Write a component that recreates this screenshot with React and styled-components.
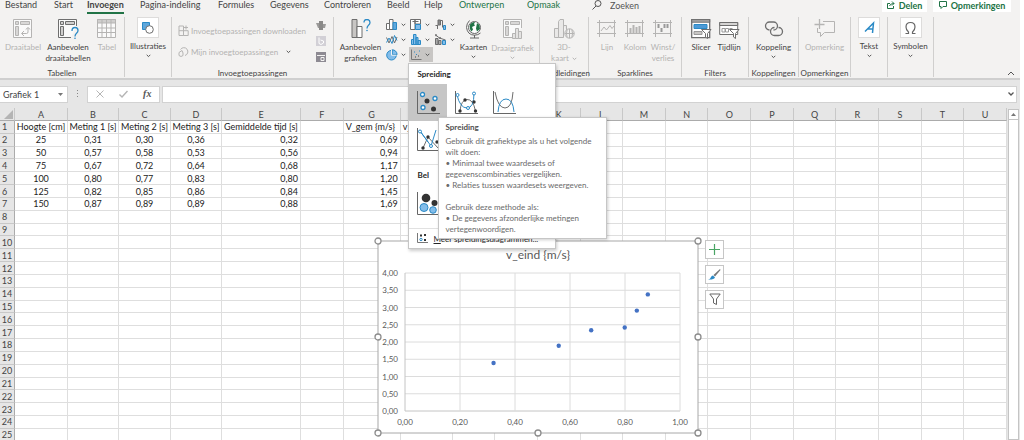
import { useState } from "react";
import styled, { createGlobalStyle } from "styled-components";

const GlobalStyle = createGlobalStyle`
  * {
    box-sizing: border-box;
  }
  body {
    margin: 0;
    background: #fff;
    font-family: Lato, "Open Sans", sans-serif;
    font-size: 8px;
    color: #444;
  }
  button, input {
    font: inherit;
    color: inherit;
    margin: 0;
    padding: 0;
    border: 0;
    background: none;
  }
  svg {
    display: block;
    flex: none;
  }
`;

const Page = styled.div`
  display: flex;
  flex-direction: column;
  height: 100vh;
  margin-right: 4px;
  overflow: hidden;
  background: #e6e6e6;
`;

/* tabs */

const TabBar = styled.div`
  display: flex;
  flex: none;
  height: 15px;
  padding-left: 5px;
  background: #f3f2f1;
  font-size: 9px;
`;

const Tab = styled.button`
  width: ${(p) => p.$w}px;
  height: 14px;
  padding-bottom: 4px;
  line-height: 10px;
  text-align: left;
  white-space: nowrap;
  color: ${(p) => (p.$context ? "#217346" : "#444")};
  font-weight: ${(p) => (p.$active ? 700 : 400)};

  span {
    display: inline-block;
    height: 14px;
    border-bottom: 2px solid ${(p) => (p.$active ? "#217346" : "transparent")};
  }
`;

const Search = styled.label`
  display: flex;
  flex: 1;
  align-items: center;
  gap: 8px;
  height: 10px;
  min-width: 0;

  input {
    width: 80px;
    height: 10px;
  }
  input::placeholder {
    color: #555;
    opacity: 1;
  }
`;

const TopActions = styled.div`
  display: flex;
  gap: 6px;
  padding-right: 9px;
`;

const ActionButton = styled.button`
  display: flex;
  align-items: center;
  justify-content: center;
  gap: 4px;
  width: ${(p) => p.$w}px;
  height: 12px;
  padding-bottom: 2px;
  background: #fff;
  color: #217346;
  font-weight: 700;
`;

/* ribbon */

const Ribbon = styled.div`
  display: flex;
  flex: none;
  height: 65px;
  padding-top: 2px;
  background: #f3f2f1;
  border-bottom: 2px solid #cfcfcf;
`;

const Group = styled.section`
  display: flex;
  flex-direction: column;
  justify-content: space-between;
  width: ${(p) => p.$w}px;
  height: 60px;
  border-right: 1px solid #d0cfce;
`;

const GroupBody = styled.div`
  display: flex;
  justify-content: center;
  padding: 0 ${(p) => p.$pad || 0}px;
`;

const GroupLabel = styled.div`
  line-height: 8px;
  text-align: center;
  white-space: nowrap;
`;

const BigButton = styled.button`
  display: flex;
  flex-direction: column;
  align-items: center;
  width: ${(p) => p.$w}px;
  padding-top: ${(p) => (p.$boxed ? 0 : 2)}px;
  color: ${(p) => (p.$off ? "#b4b3b2" : "#444")};
  line-height: 11px;
  white-space: nowrap;

  > span {
    margin: 3px 0 2px;
  }
`;

const LabelLine = styled.span`
  display: flex;
  align-items: center;
  justify-content: center;
  gap: 3px;
`;

const IconBox = styled.div`
  display: grid;
  place-items: center;
  width: 22px;
  height: 21px;
  background: #fff;
  border: 1px solid #dddcdb;
`;

const AddIns = styled.div`
  display: flex;
  flex: 1;
  flex-direction: column;
  gap: 10px;
  padding-top: 8px;
`;

const AddInButton = styled.button`
  display: flex;
  align-items: center;
  gap: 2px;
  height: 11px;
  color: #b4b3b2;
  white-space: nowrap;

  svg:last-child:not(:first-child) {
    margin-left: 6px;
  }
`;

const SideIcons = styled.div`
  display: flex;
  flex-direction: column;
  gap: 6px;
  padding: 4px 1px 0 0;
`;

const ChartGrid = styled.div`
  display: grid;
  grid-template-columns: 24px 25px 24px;
  grid-auto-rows: 15px;
  width: 74px;
`;

const SmallSlot = styled.div`
  position: relative;
`;

const SmallButton = styled.button`
  display: flex;
  align-items: center;
  gap: 3px;
  width: 24px;
  height: 15px;
  padding-left: 1px;
  background: ${(p) => (p.$on ? "#c8c6c4" : "transparent")};
`;

const Collapse = styled.button`
  align-self: flex-end;
  margin: 0 5px 2px auto;
`;

/* scatter menu */

const Menu = styled.div`
  position: absolute;
  top: 16px;
  left: -1px;
  z-index: 10;
  width: 148px;
  height: 186px;
  background: #fff;
  border: 1px solid #c6c6c6;
  box-shadow: 1px 2px 3px rgba(0, 0, 0, 0.2);
  color: #262626;
`;

const MenuTitle = styled.h2`
  margin: 0;
  padding: 4px 9px;
  font-size: 8px;
  line-height: 12px;
`;

const Tiles = styled.div`
  display: flex;
`;

const Tile = styled.button`
  display: grid;
  place-items: center;
  width: 38px;
  height: 37px;
  background: ${(p) => (p.$on ? "#c6c6c6" : "transparent")};
`;

const MenuSection = styled.div`
  margin-top: 6px;
  border-top: 1px solid #e1e1e1;
`;

const MoreLink = styled.button`
  display: flex;
  align-items: center;
  gap: 6px;
  padding: 4px 7px;
  white-space: nowrap;
`;

const Tooltip = styled.div`
  position: absolute;
  top: 53px;
  left: 29px;
  width: 169px;
  height: 122px;
  padding: 4px 7px;
  background: #fff;
  border: 1px solid #c6c6c6;
  box-shadow: 1px 1px 3px rgba(0, 0, 0, 0.2);
  color: #6a6a6a;
  line-height: 11px;

  strong {
    display: block;
    margin-bottom: 3px;
    color: #505050;
  }
  p {
    margin: 0;
    white-space: pre-line;
  }
`;

/* formula bar */

const FormulaBar = styled.div`
  display: flex;
  flex: none;
  align-items: center;
  height: 28px;
  padding: 5px 3px 5px 0;

  > * {
    height: 17px;
    background: #fff;
    border: 1px solid #d2d2d2;
  }
`;

const NameBox = styled.label`
  display: flex;
  align-items: center;
  width: 68px;
  padding: 0 4px 0 3px;
  border-left: 0;
  font-size: 9px;

  input {
    flex: 1;
    min-width: 0;
  }
`;

const Grip = styled.div`
  display: grid;
  place-items: center;
  width: 19px;
  background: none;
  border: 0;
`;

const FormulaTools = styled.div`
  display: flex;
  align-items: center;
  justify-content: space-around;
  width: 73px;
  margin-right: 2px;

  button {
    display: grid;
    place-items: center;
  }
`;

const Fx = styled.span`
  color: #555;
  font: italic 700 10px/12px "Liberation Serif", serif;
`;

const FormulaInput = styled.label`
  display: flex;
  flex: 1;
  align-items: center;
  padding-right: 2px;

  input {
    flex: 1;
  }
`;

/* sheet */

const SheetArea = styled.div`
  position: relative;
  display: flex;
  flex: 1;
  min-height: 0;
`;

const SheetView = styled.div`
  flex: 1;
  min-width: 0;
  overflow: hidden;
`;

const Sheet = styled.table`
  width: 100%;
  height: 334px;
  border-collapse: separate;
  border-spacing: 0;
  table-layout: fixed;
  background: #fff;
  color: #222;
  font-size: 9px;
  line-height: 11px;
`;

const Col = styled.col`
  width: ${(p) => (p.$w ? `${p.$w}px` : "auto")};
`;

const ColHead = styled.th`
  height: 13px;
  padding: 0;
  background: #e6e6e6;
  border-right: 1px solid #c8c8c8;
  border-bottom: 1px solid #ababab;
  color: #444;
  font-weight: 400;

  svg {
    margin-left: 4px;
  }
`;

const RowHead = styled.th`
  padding: 0;
  background: #e6e6e6;
  border-right: 1px solid #ababab;
  border-bottom: 1px solid #c8c8c8;
  color: #444;
  font-weight: 400;
  text-align: ${(p) => (p.$two ? "center" : "left")};
  text-indent: ${(p) => (p.$two ? 0 : 2)}px;
`;

const Cell = styled.td`
  padding: 0 ${(p) => (p.$align === "center" ? 0 : 2)}px;
  overflow: hidden;
  border-right: 1px solid #dedede;
  border-bottom: 1px solid #dedede;
  text-align: ${(p) => p.$align};
  white-space: nowrap;
`;

const ScrollBar = styled.div`
  width: 11px;
  margin: 1px 1px 0 1px;
  background: #fff;
  border: 1px solid #c4c4c4;

  button {
    display: grid;
    place-items: center;
    width: 9px;
    height: 10px;
    border-bottom: 1px solid #c4c4c4;
  }
`;

const ChartFrame = styled.div`
  position: absolute;
  top: 129px;
  left: 374px;
`;

const ChartTools = styled.div`
  position: absolute;
  top: 132px;
  left: 705px;
  display: flex;
  flex-direction: column;
  gap: 6px;

  button {
    display: grid;
    place-items: center;
    width: 19px;
    height: 19px;
    background: #fff;
    border: 1px solid #c6c6c6;
  }
`;

const DARK = "#6e6e6e";
const LIGHT = "#b5b4b3";
const BLUE = "#2b8ac6";
const SKY = "#83bdea";

const Svg = ({ w, h, c = DARK, children }) => (
  <svg width={w} height={h} viewBox={`0 0 ${w} ${h}`} fill="none" stroke={c} aria-hidden="true">
    {children}
  </svg>
);

const Chevron = ({ c = "#555" }) => (
  <Svg w={5} h={4} c={c}>
    <path d="M.7 .8l1.8 1.8L4.3 .8" />
  </Svg>
);

const PivotIcon = ({ c = LIGHT }) => (
  <Svg w={20} h={20} c={c}>
    <path d="M.5 .5h18v18H.5z" fill="#fafafa" />
    <path d="M2.5 2.5h3v3h-3zM7.5 2.5h9v3h-9zM2.5 7.5h3v9h-3z" fill="#d9d8d7" />
    <path d="M9 14.5h4.5q1.5 0 1.5-1.5V9M11 12l-2.5 2.5L11 17M12.7 10.5L15 8.500l2.300 2" />
  </Svg>
);

const RecommendedPivotIcon = () => (
  <Svg w={22} h={20}>
    <path d="M19.5 7V.5H1.5v18H14" fill="#fafafa" />
    <path d="M3.5 2.5h3v3h-3zM8.5 2.5h9v3h-9zM3.5 7.5h3v9h-3z" fill="#d0cfce" />
    <path d="M15 12q0-3.500 3-3.500t3 3q0 1.500-1.500 2.800T18 17.500" stroke={BLUE} strokeWidth="1.3" />
    <circle cx="18" cy="19.2" r=".8" fill={BLUE} stroke="none" />
  </Svg>
);

const TableIcon = () => (
  <Svg w={20} h={20} c={LIGHT}>
    <path d="M.5 .5h18v18H.5z" fill="#fafafa" />
    <path d="M.5 .5h18v3.500H.5z" fill="#cfcecd" />
    <path d="M.5 9h18M.5 13.5h18M5 .5v18M9.5 .5v18M14 .5v18" />
  </Svg>
);

const ShapesIcon = () => (
  <Svg w={14} h={14}>
    <path d="M1.5 1.5h7v7h-7z" fill="#5fa7dc" stroke={BLUE} />
    <circle cx="8.5" cy="8.5" r="3.8" fill="#fff" />
  </Svg>
);

const StoreIcon = () => (
  <Svg w={11} h={11} c={LIGHT}>
    <path d="M1 1h4.500v9.500H1zM1 5.700h9.200v4.800H5.500V5.700M8 .5v4M6 2.500h4" />
  </Svg>
);

const AddInsIcon = () => (
  <Svg w={11} h={11} c={LIGHT}>
    <path d="M7 9.500a4 4 0 1 0-4.500-6M4 4.500L1 6.500v3l2 1 2-1V7z" />
  </Svg>
);

const PeopleGraphIcon = () => (
  <Svg w={10} h={9} c="none">
    <path d="M0 2h3v5H2zM7 3h3l-1 4H7z" fill="#9b9a99" />
    <path d="M3 0h4v9H3z" fill="#8a8988" />
  </Svg>
);

const BingIcon = () => (
  <Svg w={10} h={10} c="none">
    <path d="M0 0h10v10H0z" fill="#d2d0d6" />
    <path d="M3 1.500v6l2 1 2.500-1.500V5L4.500 4" stroke="#fff" />
  </Svg>
);

const VisioIcon = () => (
  <Svg w={10} h={10} c="none">
    <path d="M0 0h10v10H0z" fill="#8d8a92" />
    <path d="M1 3.500h8M5 5.500h3v3H5z" stroke="#f3f2f1" />
  </Svg>
);

const RecommendedChartIcon = () => (
  <Svg w={20} h={20}>
    <path d="M1 .5h5v18H1z" fill="#c8c6c4" />
    <path d="M6 7.500h5v11H6z" fill="#fff" />
    <path d="M13 3.500q0-3 3-3t3 3q0 1.500-1.500 2.700T16 9.500" stroke={BLUE} strokeWidth="1.3" />
    <circle cx="16" cy="11.5" r=".8" fill={BLUE} stroke="none" />
  </Svg>
);

const ColumnIcon = () => (
  <Svg w={12} h={12}>
    <path d="M.5 4.500h3v6h-3z" fill="#fff" />
    <path d="M3.500 .5h3.500v10H3.500z" fill="#fff" />
    <path d="M7 3.500h3.500v7H7z" fill="#5fa7dc" stroke={BLUE} />
  </Svg>
);

const TreeMapIcon = () => (
  <Svg w={12} h={12}>
    <path d="M.5 .5h4.500v10H.5zM5 .5h5.500v4.500H5z" fill="#fff" />
    <path d="M5.500 5.500h5v5h-5z" fill={SKY} stroke={BLUE} />
    <path d="M2.500 2.500h6" />
  </Svg>
);

const WaterfallIcon = () => (
  <Svg w={12} h={12}>
    <path d="M.5 6.500h2M2.500 10V6M5.500 1.500h2v7" />
    <path d="M3 1h2.500v5H3z" fill="#888" />
    <path d="M8.500 6.500h2v4h-2z" fill={SKY} stroke={BLUE} />
  </Svg>
);

const LineIcon = () => (
  <Svg w={12} h={12}>
    <path d="M.5 3.500L3 9l3-6.500L8.500 9 11 3" />
    <path d="M.5 8.500L3 4l3 5.500 2.500-8L11 6.500" stroke={BLUE} />
  </Svg>
);

const HistogramIcon = () => (
  <Svg w={12} h={12} c={BLUE}>
    <path d="M1.500 5.500h2v5h-2zM3.500 .5h2.500v10H3.500zM6 3.500h2v7H6zM8 6.500h2.500v4H8z" fill={SKY} />
  </Svg>
);

const ComboIcon = () => (
  <Svg w={12} h={12}>
    <path d="M.5 4.500h2.500v6H.5zM3.500 6.500H6v4H3.500z" fill="#aaa" />
    <path d="M7.500 6.500h3v4h-3z" fill={SKY} stroke={BLUE} />
    <path d="M.5 1l4 3 6 2" />
    <circle cx="1" cy="1.2" r=".7" />
    <circle cx="5" cy="4" r=".7" />
  </Svg>
);

const PieIcon = () => (
  <Svg w={12} h={12} c={BLUE}>
    <circle cx="5.5" cy="6.2" r="4.800" fill={SKY} />
    <path d="M6.200 5.500V.8a4.800 4.800 0 0 1 4.900 4.700z" fill={SKY} />
    <path d="M5.500 1v5.200h5" stroke="#f3f2f1" />
  </Svg>
);

const ScatterSmallIcon = () => (
  <Svg w={12} h={12} c="#777">
    <path d="M1.500 .5v10h10" />
    <path d="M4 3h1M9 2h1M6 5.500h1" stroke={BLUE} />
    <path d="M5 8h1M8 7h1" stroke="#444" />
  </Svg>
);

const GlobeIcon = () => (
  <Svg w={18} h={20} c="#666">
    <circle cx="9.5" cy="8.5" r="6" fill="#fff" />
    <path d="M5 5.500q2-3 5-2.500l-1 2 1 1.500-3 1.500 1 2.500-1.500 2Q4 10 5 5.500zM12 4l2.500 2 .5 4-3 2.500-1-3z" fill="#217346" stroke="none" />
    <path d="M4.500 1.500Q1.500 4.500 1.500 8.500q1 7.500 8 7.700 3.500 0 6-2.200M9.500 16v3M5 19h9" />
  </Svg>
);

const PivotChartIcon = () => (
  <Svg w={21} h={21} c={LIGHT}>
    <path d="M19.500 9V.5h-18v18H11" fill="#fafafa" />
    <path d="M3.500 2.500h3v3h-3zM8.500 2.500h9v3h-9zM3.500 7.500h3v9h-3z" fill="#d9d8d7" />
    <path d="M10.500 14.500h3v5h-3zM13.500 9.500h3v10h-3zM16.500 12.500h3v7h-3z" fill="#e4e3e2" />
  </Svg>
);

const MapIcon = () => (
  <Svg w={21} h={20} c={LIGHT}>
    <path d="M.5 9.500h4v9h-4zM4.500 2.500L6 .5h3.500v18h-5zM9.500 6.500h3v5" fill="#e9e8e7" />
    <circle cx="15.5" cy="14.5" r="4.7" fill="#f3f2f1" />
    <path d="M10.800 14.500h9.400M15.500 9.800v9.400M13.200 10.500q-1.500 4 0 8M17.800 10.500q1.500 4 0 8" />
  </Svg>
);

const SparkIcon = ({ kind }) => (
  <Svg w={20} h={20} c={LIGHT}>
    <path d="M0 3.500h19M0 14.500h19M2.500 1v17M17.500 1v17" />
    {kind === "line" && <path d="M4 12l3-4 2.500 3L13 6.500l2 3 2-2.500" />}
    {kind === "column" && <path d="M5.500 14V9M8.500 14V6M11.500 14V8M14.500 14V7" strokeWidth="2" />}
    {kind === "winloss" && <path d="M5.500 5v4M8.500 9v4M11.500 5v4M14.500 5v4" strokeWidth="2" stroke="#999" />}
  </Svg>
);

const SlicerIcon = () => (
  <Svg w={21} h={20}>
    <path d="M.7 .7h18v18H.7z" fill="#fff" strokeWidth="1.3" />
    <path d="M.7 .7h18v2.500H.7z" fill="#aaa" />
    <path d="M3 5.500h13v4H3z" fill="#4d9ad6" stroke={BLUE} />
    <path d="M3 12.500h8v3H3z" fill="#c8c6c4" stroke="#999" />
    <path d="M10.500 10.500h9.500l-3.500 4v5l-2-1.500v-3.500z" fill="#fff" />
  </Svg>
);

const TimelineIcon = () => (
  <Svg w={21} h={20}>
    <path d="M.7 3.500h18v12H.7z" fill="#fff" />
    <path d="M.7 3.500h18v3H.7z" fill="#d5d4d3" />
    <path d="M3 9.500h3v3.500H3zM6.500 9.500h3v3.500h-3zM10.500 9.500h3" stroke="#999" />
    <path d="M10.500 10.500h9.500l-3.500 4v5l-2-1.500v-3.500z" fill="#fff" />
  </Svg>
);

const LinkIcon = () => (
  <Svg w={20} h={20}>
    <path d="M5.500 11a4 4 0 0 1 0-8h4a4 4 0 0 1 0 8" strokeWidth="1.3" />
    <path d="M14.500 8.500a4 4 0 0 1 0 8h-4a4 4 0 0 1 0-8" strokeWidth="1.3" />
  </Svg>
);

const CommentIcon = () => (
  <Svg w={21} h={20} c={LIGHT}>
    <path d="M9 2.500h11.500v11h-10l-4 4v-4h-3V9" fill="#f5f4f3" />
    <path d="M5.500 0v10M.5 5.500h10" strokeWidth="1.3" />
  </Svg>
);

const WordArtIcon = () => (
  <Svg w={13} h={14} c={BLUE}>
    <path d="M2 10.500L10.500 2l-1 10M4.500 8h5.500" strokeWidth="1.5" />
  </Svg>
);

const OmegaIcon = () => (
  <Svg w={13} h={14} c="#666">
    <path d="M1.500 12.500h3V11Q2 9 2 6q0-4.500 4.500-4.500T11 6q0 3-2.500 5v1.500h3" strokeWidth="1.2" />
  </Svg>
);

const axes = <path d="M1.500 0v22.500H24" stroke="#666" />;

const ScatterIcon = () => (
  <Svg w={24} h={24}>
    {axes}
    <g stroke={BLUE} fill="#fff" strokeWidth="1.3">
      <circle cx="6.5" cy="3.5" r="2" />
      <circle cx="19" cy="7.5" r="2" />
      <circle cx="7" cy="16.5" r="2" />
    </g>
    <g fill="#333" stroke="none">
      <circle cx="11" cy="10" r="2.5" />
      <circle cx="17.5" cy="18" r="2.5" />
    </g>
  </Svg>
);

const SmoothMarkersIcon = () => (
  <Svg w={24} h={24}>
    {axes}
    <path d="M6 20Q7 9 13 8.500T21.500 20" />
    <path d="M3 4q3 13 10 13T20 2" stroke={BLUE} />
    <g fill="#333" stroke="none">
      <circle cx="6" cy="20" r="1.7" />
      <circle cx="11" cy="9" r="1.7" />
      <circle cx="20" cy="11" r="1.7" />
      <circle cx="21.5" cy="20" r="1.7" />
    </g>
    <g fill="#fff" stroke={BLUE}>
      <circle cx="3.5" cy="4" r="1.5" />
      <circle cx="14" cy="17" r="1.5" />
      <circle cx="20" cy="2.5" r="1.5" />
    </g>
  </Svg>
);

const SmoothIcon = () => (
  <Svg w={24} h={24}>
    {axes}
    <path d="M3 1q3 16 10 16T21 1" />
    <path d="M6 21Q7 8 14 8t8 13" stroke={BLUE} />
  </Svg>
);

const StraightMarkersIcon = () => (
  <Svg w={24} h={24}>
    {axes}
    <path d="M7 20l5-11 10 11" />
    <path d="M4 3l11 15 5-16M4 3l8 11" stroke={BLUE} />
    <g fill="#333" stroke="none">
      <circle cx="7" cy="20" r="1.7" />
      <circle cx="12" cy="9" r="1.7" />
      <circle cx="21" cy="14" r="1.7" />
    </g>
    <g fill="#fff" stroke={BLUE}>
      <circle cx="4" cy="3.5" r="1.5" />
      <circle cx="15" cy="18" r="1.5" />
    </g>
  </Svg>
);

const BubbleIcon = () => (
  <Svg w={24} h={24}>
    {axes}
    <circle cx="10" cy="6" r="4.3" fill="#333" stroke="none" />
    <circle cx="18.5" cy="11" r="3" fill="#333" stroke="none" />
    <circle cx="8" cy="15.5" r="4" fill={SKY} stroke={BLUE} />
    <circle cx="17" cy="18" r="3.3" fill={SKY} stroke={BLUE} />
  </Svg>
);

const MoreIcon = () => (
  <Svg w={12} h={11} c="none">
    <path d="M1.500 0v9.500H12" stroke="#777" />
    <path d="M4 1.500h2v2H4zM8 1h2v2H8zM8 6h2v2H8z" fill="#333" />
    <circle cx="5" cy="6.5" r="1.2" stroke={BLUE} />
  </Svg>
);

const leftTabs = [
  ["Bestand", 49],
  ["Start", 33],
  ["Invoegen", 53],
  ["Pagina-indeling", 78],
  ["Formules", 52],
  ["Gegevens", 54],
  ["Controleren", 63],
  ["Beeld", 37],
  ["Help", 35],
  ["Ontwerpen", 68, true],
  ["Opmaak", 65, true],
];

const chartButtons = [
  ["Kolom", ColumnIcon],
  ["Hiërarchie", TreeMapIcon],
  ["Waterval", WaterfallIcon],
  ["Lijn", LineIcon],
  ["Statistiek", HistogramIcon],
  ["Combinatie", ComboIcon],
  ["Cirkel", PieIcon],
];

const columns = [
  ["A", 53],
  ["B", 51],
  ["C", 52],
  ["D", 51],
  ["E", 79],
  ["F"],
  ["G", 57],
  ["H", 52],
  ..."IJKLMNOPQRSTU".split("").map((name) => [name]),
];

const rows = [
  ["Hoogte [cm]", "Meting 1 [s]", "Meting 2 [s]", "Meting 3 [s]", "Gemiddelde tijd [s]", "", "V_gem {m/s}", "v_"],
  ["25", "0,31", "0,30", "0,36", "0,32", "", "0,69"],
  ["50", "0,57", "0,58", "0,53", "0,56", "", "0,94"],
  ["75", "0,67", "0,72", "0,64", "0,68", "", "1,17"],
  ["100", "0,80", "0,77", "0,83", "0,80", "", "1,20"],
  ["125", "0,82", "0,85", "0,86", "0,84", "", "1,45"],
  ["150", "0,87", "0,89", "0,89", "0,88", "", "1,69"],
];

const points = [
  [0.322, 1.39],
  [0.559, 1.89],
  [0.677, 2.34],
  [0.799, 2.42],
  [0.843, 2.91],
  [0.883, 3.38],
];

const alignOf = (row, col) => {
  if (col < 4) return "center";
  return row === 0 ? "left" : "right";
};

const comma = (n) => n.toFixed(2).replace(".", ",");

function Big({ w, icon, label, off, boxed, chevron, inlineChevron }) {
  const lines = label.split("\n");
  return (
    <BigButton $w={w} $off={off} $boxed={boxed} disabled={off}>
      {boxed ? <IconBox>{icon}</IconBox> : icon}
      <span>
        {lines.map((line, i) => (
          <LabelLine key={line}>
            {line}
            {inlineChevron && i === lines.length - 1 && <Chevron c={LIGHT} />}
          </LabelLine>
        ))}
      </span>
      {chevron && <Chevron c={off ? LIGHT : "#555"} />}
    </BigButton>
  );
}

function ScatterMenu() {
  return (
    <Menu>
      <MenuTitle>Spreiding</MenuTitle>
      <Tiles>
        <Tile $on aria-label="Spreiding"><ScatterIcon /></Tile>
        <Tile aria-label="Vloeiende lijnen en markeringen"><SmoothMarkersIcon /></Tile>
        <Tile aria-label="Vloeiende lijnen"><SmoothIcon /></Tile>
      </Tiles>
      <Tiles>
        <Tile aria-label="Rechte lijnen en markeringen"><StraightMarkersIcon /></Tile>
      </Tiles>
      <MenuSection>
        <MenuTitle>Bel</MenuTitle>
        <Tile aria-label="Bel"><BubbleIcon /></Tile>
      </MenuSection>
      <MenuSection>
        <MoreLink>
          <MoreIcon />
          <span><u>M</u>eer spreidingsdiagrammen...</span>
        </MoreLink>
      </MenuSection>
      <Tooltip role="tooltip">
        <strong>Spreiding</strong>
        <p>
          {"Gebruik dit grafiektype als u het volgende\nwilt doen:\n• Minimaal twee waardesets of\ngegevenscombinaties vergelijken.\n• Relaties tussen waardesets weergeven.\n\nGebruik deze methode als:\n• De gegevens afzonderlijke metingen\nvertegenwoordigen."}
        </p>
      </Tooltip>
    </Menu>
  );
}

function Chart() {
  const x = (v) => 31 + v * 275;
  const y = (v) => 174 - (v / 4) * 138;
  const handles = [[4, 4], [324, 4], [4, 100], [324, 100], [4, 196], [164, 196], [324, 196]];
  return (
    <svg width="328" height="200" fontFamily="Lato, sans-serif" fill="#595959">
      <rect x="4" y="4" width="320" height="192" fill="#fff" stroke="#a8a8a8" />
      <text x="164" y="22" fontSize="12" textAnchor="middle">v_eind {"{m/s}"}</text>
      {[0, 0.5, 1, 1.5, 2, 2.5, 3, 3.5, 4].map((v) => (
        <g key={v}>
          <path d={`M31 ${y(v)}H306`} stroke={v ? "#dcdcdc" : "#c4c4c4"} />
          <text x="24" y={y(v) + 3} fontSize="8" textAnchor="end">{comma(v)}</text>
        </g>
      ))}
      {[0, 0.2, 0.4, 0.6, 0.8, 1].map((v) => (
        <g key={v}>
          <path d={`M${x(v)} 36V174`} stroke={v ? "#dcdcdc" : "#c4c4c4"} />
          <text x={x(v)} y="188" fontSize="8" textAnchor="middle">{comma(v)}</text>
        </g>
      ))}
      {points.map(([px, py]) => (
        <circle key={px} cx={x(px)} cy={y(py)} r="2.2" fill="#4472c4" />
      ))}
      {handles.map(([hx, hy]) => (
        <circle key={`${hx}-${hy}`} cx={hx} cy={hy} r="3" fill="#fff" stroke="#8c8c8c" strokeWidth="1.3" />
      ))}
    </svg>
  );
}

export default function App() {
  const [active, setActive] = useState("Invoegen");

  return (
    <Page>
      <GlobalStyle />
      <TabBar>
        {leftTabs.map(([name, w, context]) => (
          <Tab key={name} $w={w} $context={context} $active={name === active} onClick={() => setActive(name)}>
            <span>{name}</span>
          </Tab>
        ))}
        <Search>
          <Svg w={10} h={10} c="#555">
            <circle cx="6" cy="3.5" r="3" />
            <path d="M4 6L.5 9.500" />
          </Svg>
          <input aria-label="Zoeken" placeholder="Zoeken" />
        </Search>
        <TopActions>
          <ActionButton $w={45}>
            <Svg w={8} h={8} c="#217346">
              <path d="M3 2.500H.5v5h6V5M2.500 5Q3 2.500 7 2.500M5 .5l2 2-2 2" />
            </Svg>
            Delen
          </ActionButton>
          <ActionButton $w={78}>
            <Svg w={8} h={8} c="#217346">
              <path d="M.5 .5h7v5H4l-2 2v-2H.5z" />
            </Svg>
            Opmerkingen
          </ActionButton>
        </TopActions>
      </TabBar>

      <Ribbon>
        <Group $w={125}>
          <GroupBody>
            <Big w={42} icon={<PivotIcon />} label="Draaitabel" off />
            <Big w={48} icon={<RecommendedPivotIcon />} label={"Aanbevolen\ndraaitabellen"} />
            <Big w={30} icon={<TableIcon />} label="Tabel" off />
          </GroupBody>
          <GroupLabel>Tabellen</GroupLabel>
        </Group>
        <Group $w={47}>
          <GroupBody>
            <Big w={44} icon={<ShapesIcon />} label="Illustraties" boxed chevron />
          </GroupBody>
        </Group>
        <Group $w={162}>
          <GroupBody $pad={6}>
            <AddIns>
              <AddInButton disabled><StoreIcon />Invoegtoepassingen downloaden</AddInButton>
              <AddInButton disabled><AddInsIcon />Mijn invoegtoepassingen<Chevron /></AddInButton>
            </AddIns>
            <SideIcons>
              <PeopleGraphIcon />
              <BingIcon />
              <VisioIcon />
            </SideIcons>
          </GroupBody>
          <GroupLabel>Invoegtoepassingen</GroupLabel>
        </Group>
        <Group $w={206}>
          <GroupBody>
            <Big w={48} icon={<RecommendedChartIcon />} label={"Aanbevolen\ngrafieken"} />
            <ChartGrid>
              {chartButtons.map(([name, Icon]) => (
                <SmallButton key={name} aria-label={name}>
                  <Icon />
                  <Chevron />
                </SmallButton>
              ))}
              <SmallSlot>
                <SmallButton $on aria-label="Spreiding">
                  <ScatterSmallIcon />
                  <Chevron />
                </SmallButton>
                <ScatterMenu />
              </SmallSlot>
            </ChartGrid>
            <Big w={30} icon={<GlobeIcon />} label="Kaarten" chevron />
            <Big w={48} icon={<PivotChartIcon />} label="Draaigrafiek" off chevron />
          </GroupBody>
        </Group>
        <Group $w={49}>
          <GroupBody>
            <Big w={44} icon={<MapIcon />} label={"3D-\nkaart"} off inlineChevron />
          </GroupBody>
          <GroupLabel>Rondleidingen</GroupLabel>
        </Group>
        <Group $w={93}>
          <GroupBody>
            <Big w={28} icon={<SparkIcon kind="line" />} label="Lijn" off />
            <Big w={28} icon={<SparkIcon kind="column" />} label="Kolom" off />
            <Big w={28} icon={<SparkIcon kind="winloss" />} label={"Winst/\nverlies"} off />
          </GroupBody>
          <GroupLabel>Sparklines</GroupLabel>
        </Group>
        <Group $w={67}>
          <GroupBody>
            <Big w={28} icon={<SlicerIcon />} label="Slicer" />
            <Big w={28} icon={<TimelineIcon />} label="Tijdlijn" />
          </GroupBody>
          <GroupLabel>Filters</GroupLabel>
        </Group>
        <Group $w={50}>
          <GroupBody>
            <Big w={44} icon={<LinkIcon />} label="Koppeling" chevron />
          </GroupBody>
          <GroupLabel>Koppelingen</GroupLabel>
        </Group>
        <Group $w={52}>
          <GroupBody>
            <Big w={44} icon={<CommentIcon />} label="Opmerking" off />
          </GroupBody>
          <GroupLabel>Opmerkingen</GroupLabel>
        </Group>
        <Group $w={37}>
          <GroupBody>
            <Big w={30} icon={<WordArtIcon />} label="Tekst" boxed chevron />
          </GroupBody>
        </Group>
        <Group $w={46}>
          <GroupBody>
            <Big w={44} icon={<OmegaIcon />} label="Symbolen" boxed chevron />
          </GroupBody>
        </Group>
        <Collapse aria-label="Lint samenvouwen">
          <Svg w={8} h={5} c="#555">
            <path d="M1 4l3-3 3 3" />
          </Svg>
        </Collapse>
      </Ribbon>

      <FormulaBar>
        <NameBox>
          <input aria-label="Naamvak" defaultValue="Grafiek 1" />
          <Svg w={5} h={3} c="none"><path d="M0 0h5L2.500 3z" fill="#777" /></Svg>
        </NameBox>
        <Grip>
          <Svg w={2} h={8} c="none"><path d="M0 0h1v1H0zM0 3h1v1H0zM0 6h1v1H0z" fill="#888" /></Svg>
        </Grip>
        <FormulaTools>
          <button aria-label="Annuleren">
            <Svg w={8} h={8} c="#b5b5b5"><path d="M.5 .5l7 7M7.500 .5l-7 7" /></Svg>
          </button>
          <button aria-label="Invoeren">
            <Svg w={9} h={8} c="#b5b5b5"><path d="M.5 4.500L3 7l5.500-6" strokeWidth="1.4" /></Svg>
          </button>
          <button aria-label="Functie invoegen"><Fx>fx</Fx></button>
        </FormulaTools>
        <FormulaInput>
          <input aria-label="Formulebalk" />
          <Svg w={6} h={4} c="#555"><path d="M.5 .5L3 3 5.500 .5" strokeWidth="1.3" /></Svg>
        </FormulaInput>
      </FormulaBar>

      <SheetArea>
        <SheetView>
          <Sheet>
            <colgroup>
              <Col $w={15} />
              {columns.map(([name, w]) => (
                <Col key={name} $w={w} />
              ))}
            </colgroup>
            <thead>
              <tr>
                <ColHead>
                  <Svg w={9} h={9} c="none"><path d="M9 0v9H0z" fill="#b4b4b4" /></Svg>
                </ColHead>
                {columns.map(([name]) => (
                  <ColHead key={name}>{name}</ColHead>
                ))}
              </tr>
            </thead>
            <tbody>
              {Array.from({ length: 25 }, (_, r) => (
                <tr key={r}>
                  <RowHead $two={r > 8}>{r + 1}</RowHead>
                  {columns.map(([name], c) => (
                    <Cell key={name} $align={alignOf(r, c)}>
                      {rows[r]?.[c]}
                    </Cell>
                  ))}
                </tr>
              ))}
            </tbody>
          </Sheet>
        </SheetView>
        <ScrollBar>
          <button aria-label="Omhoog">
            <Svg w={5} h={3} c="none"><path d="M0 3h5L2.500 0z" fill="#777" /></Svg>
          </button>
        </ScrollBar>
        <ChartFrame>
          <Chart />
        </ChartFrame>
        <ChartTools>
          <button aria-label="Grafiekelementen">
            <Svg w={11} h={11} c="#4aa564"><path d="M5.500 0v11M0 5.500h11" strokeWidth="1.2" /></Svg>
          </button>
          <button aria-label="Grafiekstijlen">
            <Svg w={13} h={12} c="none">
              <path d="M12 0L5.500 6l1.500 1.500L12.500 1z" fill="#777" />
              <path d="M5 6.500l2 2Q5.500 11 0 10.500 2.500 10 3 8q.5-1.500 2-1.500z" fill={BLUE} />
            </Svg>
          </button>
          <button aria-label="Grafiekfilters">
            <Svg w={12} h={13} c="#666"><path d="M.8 1h10.400L7.500 6v5.500L4.500 10V6z" /></Svg>
          </button>
        </ChartTools>
      </SheetArea>
    </Page>
  );
}
